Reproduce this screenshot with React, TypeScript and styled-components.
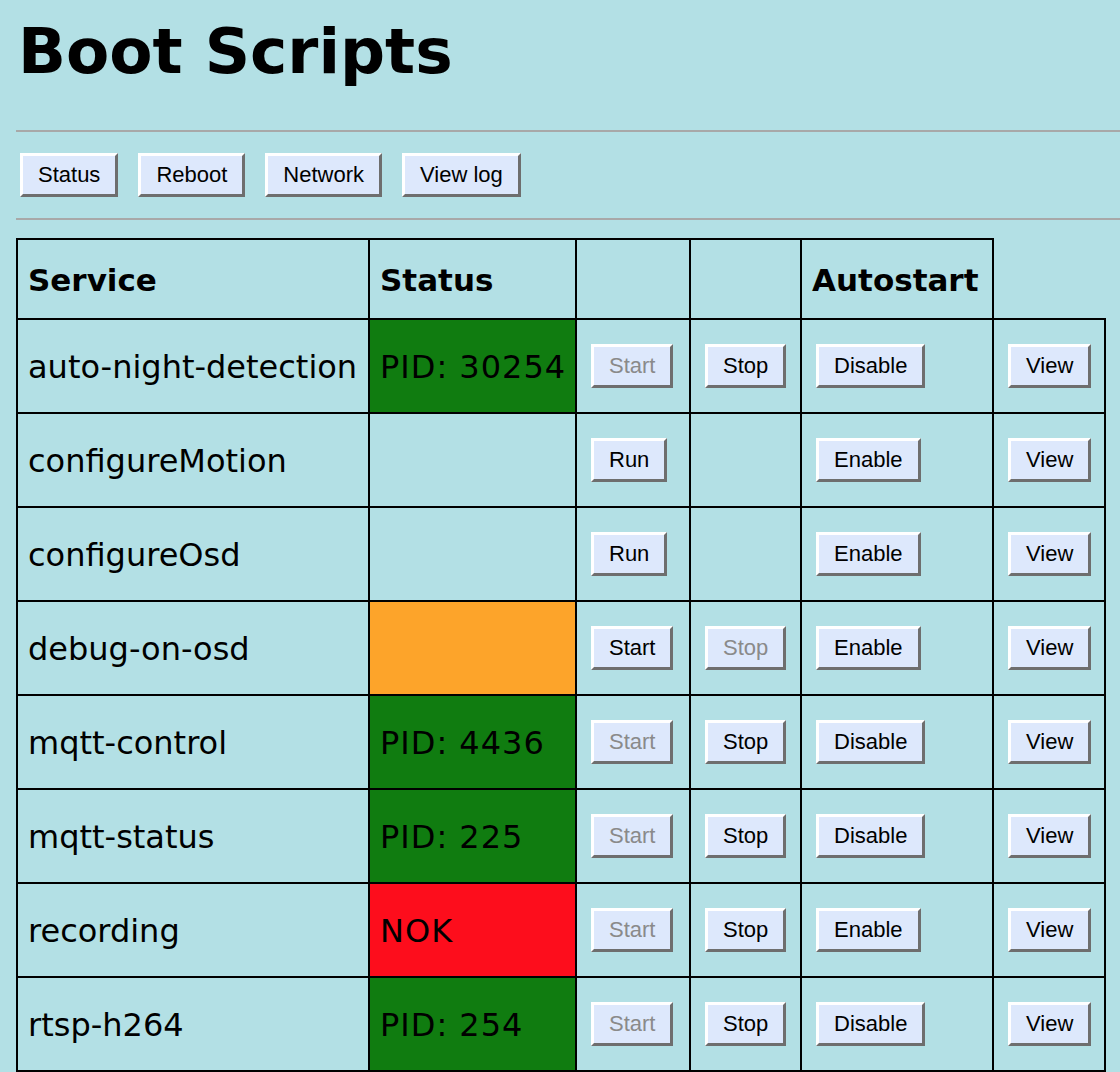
import React from "react";
import styled, { createGlobalStyle } from "styled-components";

const GlobalStyle = createGlobalStyle`
  html, body {
    margin: 0;
    padding: 0;
    background: #b3e0e5;
    color: #000;
  }
`;

const Page = styled.div`
  padding: 0 0 0 16px;
  font-family: "DejaVu Sans", Verdana, sans-serif;
`;

const Title = styled.h1`
  margin: 0;
  padding-top: 16px;
  font-size: 63px;
  line-height: 71px;
  font-weight: bold;
  padding-left: 2px;
`;

const Rule = styled.div<{ $top: number }>`
  height: 2px;
  background: #a8a8a8;
  margin-top: ${(p) => p.$top}px;
`;

const Nav = styled.div`
  display: flex;
  gap: 20px;
  margin-top: 21px;
  padding-left: 4px;
`;

const Button = styled.button<{ $off?: boolean }>`
  box-sizing: border-box;
  height: 44px;
  margin: 0;
  padding: 0 15px;
  font-family: "Liberation Sans", Arial, sans-serif;
  font-size: 22px;
  line-height: 38px;
  color: ${(p) => (p.$off ? "#8a8a8a" : "#000")};
  background: #dde8fc;
  border-width: 3px;
  border-style: solid;
  border-color: #ffffff #6e6e6e #6e6e6e #ffffff;
  border-radius: 0;
  cursor: default;
  white-space: nowrap;
`;

const Table = styled.table`
  border-collapse: collapse;
  table-layout: fixed;
  margin-top: 18px;
  width: 1088px;
`;

const HeadCell = styled.th`
  border: 2px solid #000;
  height: 76px;
  padding: 2px 10px 0;
  text-align: left;
  vertical-align: middle;
  font-size: 31px;
  font-weight: bold;
`;

const statusBg: Record<string, string> = {
  ok: "#107c10",
  warn: "#fda42a",
  err: "#fd0d1c",
  none: "transparent",
};

const Cell = styled.td<{ $status?: string; $btn?: boolean }>`
  border: 2px solid #000;
  height: 90px;
  padding: ${(p) => (p.$btn ? "0 0 2px 14px" : "2px 10px 0")};
  vertical-align: middle;
  font-size: 32px;
  white-space: nowrap;
  letter-spacing: ${(p) => (p.$status ? "1px" : "0")};
  background: ${(p) => statusBg[p.$status || "none"]};
`;

type Btn = { label: string; off?: boolean } | null;
type Row = {
  name: string;
  status: "ok" | "warn" | "err" | "none";
  text: string;
  start: Btn;
  stop: Btn;
  auto: string;
};

const rows: Row[] = [
  { name: "auto-night-detection", status: "ok", text: "PID: 30254", start: { label: "Start", off: true }, stop: { label: "Stop" }, auto: "Disable" },
  { name: "configureMotion", status: "none", text: "", start: { label: "Run" }, stop: null, auto: "Enable" },
  { name: "configureOsd", status: "none", text: "", start: { label: "Run" }, stop: null, auto: "Enable" },
  { name: "debug-on-osd", status: "warn", text: "", start: { label: "Start" }, stop: { label: "Stop", off: true }, auto: "Enable" },
  { name: "mqtt-control", status: "ok", text: "PID: 4436", start: { label: "Start", off: true }, stop: { label: "Stop" }, auto: "Disable" },
  { name: "mqtt-status", status: "ok", text: "PID: 225", start: { label: "Start", off: true }, stop: { label: "Stop" }, auto: "Disable" },
  { name: "recording", status: "err", text: "NOK", start: { label: "Start", off: true }, stop: { label: "Stop" }, auto: "Enable" },
  { name: "rtsp-h264", status: "ok", text: "PID: 254", start: { label: "Start", off: true }, stop: { label: "Stop" }, auto: "Disable" },
];

const widths = [352, 207, 114, 111, 192, 112];

export default function App() {
  return (
    <Page>
      <GlobalStyle />
      <Title>Boot Scripts</Title>
      <Rule $top={43} />
      <Nav>
        <Button>Status</Button>
        <Button>Reboot</Button>
        <Button>Network</Button>
        <Button>View log</Button>
      </Nav>
      <Rule $top={21} />
      <Table>
        <colgroup>
          {widths.map((w, i) => (
            <col key={i} style={{ width: w }} />
          ))}
        </colgroup>
        <thead>
          <tr>
            <HeadCell>Service</HeadCell>
            <HeadCell>Status</HeadCell>
            <HeadCell />
            <HeadCell />
            <HeadCell>Autostart</HeadCell>
          </tr>
        </thead>
        <tbody>
          {rows.map((r) => (
            <tr key={r.name}>
              <Cell>{r.name}</Cell>
              <Cell $status={r.status}>{r.text}</Cell>
              <Cell $btn>{r.start && <Button $off={r.start.off}>{r.start.label}</Button>}</Cell>
              <Cell $btn>{r.stop && <Button $off={r.stop.off}>{r.stop.label}</Button>}</Cell>
              <Cell $btn>
                <Button>{r.auto}</Button>
              </Cell>
              <Cell $btn>
                <Button>View</Button>
              </Cell>
            </tr>
          ))}
        </tbody>
      </Table>
    </Page>
  );
}
